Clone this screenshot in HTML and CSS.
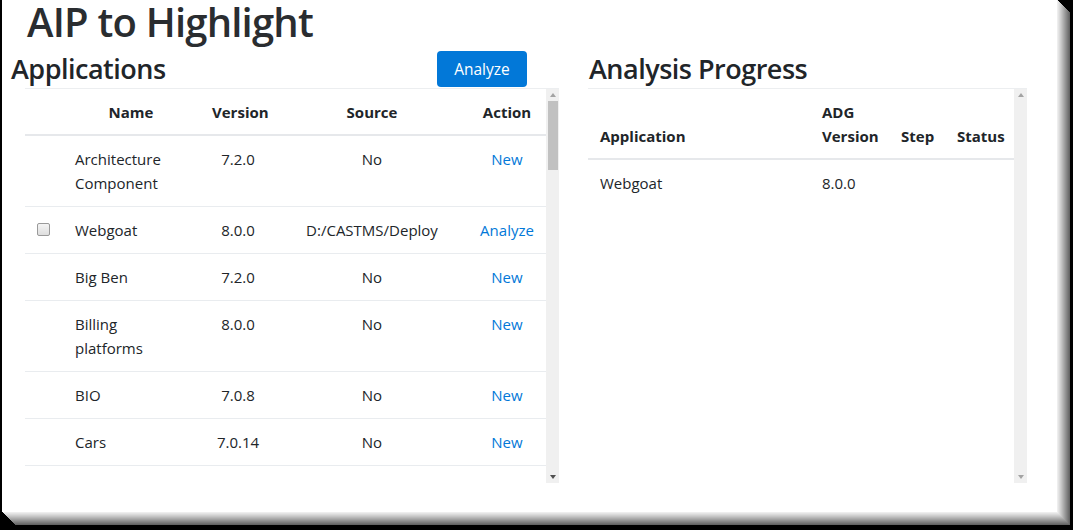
FILE: index.html
```html
<!DOCTYPE html>
<html lang="en">
<head>
<meta charset="utf-8">
<title>AIP to Highlight</title>
<link rel="stylesheet" href="styles.css">
</head>
<body>
<div class="page">
  <h1 class="title">AIP to Highlight</h1>
  <div class="columns">
    <section class="apps">
      <div class="apps-head">
        <h2 class="heading">Applications</h2>
        <button class="btn" type="button">Analyze</button>
      </div>
      <div class="grid-box apps-box">
        <div class="scroll-area">
          <table class="tbl apps-tbl">
            <colgroup>
              <col class="c-check"><col class="c-name"><col class="c-ver"><col class="c-src"><col class="c-act">
            </colgroup>
            <thead>
              <tr><th></th><th>Name</th><th>Version</th><th>Source</th><th>Action</th></tr>
            </thead>
            <tbody>
              <tr><td></td><td class="name">Architecture<br>Component</td><td>7.2.0</td><td>No</td><td><a class="link">New</a></td></tr>
              <tr><td><span class="check"></span></td><td class="name">Webgoat</td><td>8.0.0</td><td>D:/CASTMS/Deploy</td><td><a class="link">Analyze</a></td></tr>
              <tr><td></td><td class="name">Big Ben</td><td>7.2.0</td><td>No</td><td><a class="link">New</a></td></tr>
              <tr><td></td><td class="name">Billing<br>platforms</td><td>8.0.0</td><td>No</td><td><a class="link">New</a></td></tr>
              <tr><td></td><td class="name">BIO</td><td>7.0.8</td><td>No</td><td><a class="link">New</a></td></tr>
              <tr><td></td><td class="name">Cars</td><td>7.0.14</td><td>No</td><td><a class="link">New</a></td></tr>
              <tr><td></td><td class="name">Code Review</td><td>7.0.12</td><td>No</td><td><a class="link">New</a></td></tr>
              <tr><td></td><td class="name">Datamart</td><td>8.0.0</td><td>No</td><td><a class="link">New</a></td></tr>
            </tbody>
          </table>
        </div>
        <div class="sbar">
          <span class="arr-box"><span class="arr up"></span></span>
          <span class="thumb"></span>
          <span class="track-fill"></span>
          <span class="arr-box"><span class="arr down dark"></span></span>
        </div>
      </div>
    </section>
    <section class="progress">
      <div class="prog-head">
        <h2 class="heading">Analysis Progress</h2>
      </div>
      <div class="grid-box prog-box">
        <div class="scroll-area">
          <table class="tbl prog-tbl">
            <colgroup>
              <col class="p-app"><col class="p-ver"><col class="p-step"><col class="p-status">
            </colgroup>
            <thead>
              <tr><th>Application</th><th>ADG<br>Version</th><th>Step</th><th>Status</th></tr>
            </thead>
            <tbody>
              <tr><td>Webgoat</td><td>8.0.0</td><td></td><td></td></tr>
            </tbody>
          </table>
        </div>
        <div class="sbar">
          <span class="arr-box"><span class="arr up"></span></span>
          <span class="track-fill"></span>
          <span class="arr-box"><span class="arr down"></span></span>
        </div>
      </div>
    </section>
  </div>
</div>
</body>
</html>
```
FILE: styles.css
```css
html, body {
  margin: 0;
  padding: 0;
  background: #000;
  overflow: hidden;
}

body {
  width: 1073px;
  height: 530px;
  font-family: "Open Sans", "Noto Sans", "Liberation Sans", sans-serif;
  font-size: 15px;
  line-height: 1.5;
  color: #212529;
}

.page {
  margin: 2px 0 0 2px;
  width: 1055px;
  height: 513px;
  background: #fff;
  box-sizing: border-box;
  box-shadow:
    1px 1px 0 #eeeeee,
    2px 2px 0 #e4e4e4,
    3px 3px 0 #dadada,
    4px 4px 0 #cfcfcf,
    5px 5px 0 #c4c4c4,
    6px 6px 0 #b8b8b8,
    7px 7px 0 #acacac,
    8px 8px 0 #a0a0a0,
    9px 9px 0 #949494,
    10px 10px 0 #888888,
    11px 11px 0 #7c7c7c,
    12px 12px 0 #707070,
    13px 13px 0 #646464;
}

.title {
  margin: -3px 0 -3px 0;
  padding-left: 25px;
  font-size: 40px;
  line-height: 46px;
  height: 46px;
  font-weight: 600;
  color: #2a2d30;
  letter-spacing: -0.8px;
}

.columns {
  display: flex;
  margin-top: 8px;
  padding-left: 9px;
  gap: 29px;
}

.apps {
  width: 548px;
}

.apps-head {
  width: 516px;
  height: 38px;
  display: flex;
  align-items: center;
  justify-content: space-between;
}

.prog-head {
  height: 38px;
  display: flex;
  align-items: center;
}

.heading {
  margin: 0;
  font-size: 27px;
  line-height: 36px;
  font-weight: 600;
  letter-spacing: -0.5px;
  color: #212529;
}

.prog-head .heading {
  margin-left: 1px;
}

.btn {
  width: 90px;
  height: 36px;
  border: 0;
  border-radius: 4px;
  background: #0278d8;
  color: #fff;
  font-family: inherit;
  font-size: 15.5px;
  padding: 0;
  line-height: 36px;
}

.grid-box {
  display: flex;
  border-top: 1px solid #eceef0;
  box-sizing: border-box;
  height: 395px;
}

.apps-box {
  margin-left: 14px;
  width: 534px;
}

.prog-box {
  width: 439px;
}

.scroll-area {
  flex: 1;
  overflow: hidden;
}

.tbl {
  border-collapse: collapse;
  table-layout: fixed;
  width: 100%;
}

.tbl th,
.tbl td {
  padding: 11px 12px;
  border-top: 1px solid #e9ecef;
  line-height: 24px;
}

.tbl thead th {
  border-top: 0;
  padding-bottom: 10px;
  border-bottom: 2px solid #e6e8eb;
  font-weight: 700;
  vertical-align: bottom;
}

.tbl tbody tr:first-child td {
  border-top: 0;
}

.apps-tbl th,
.apps-tbl td {
  text-align: center;
  vertical-align: top;
}

.apps-tbl td.name {
  text-align: left;
  padding-left: 13px;
}

.c-check { width: 37px; }
.c-name { width: 138px; }
.c-ver { width: 76px; }
.c-src { width: 192px; }
.c-act { width: 78px; }

.prog-tbl th,
.prog-tbl td {
  text-align: left;
}

.prog-tbl tbody td {
  vertical-align: top;
}

.p-app { width: 222px; }
.p-ver { width: 79px; }
.p-step { width: 56px; }
.p-status { width: 69px; }

.link {
  color: #0278d8;
  text-decoration: none;
}

.check {
  display: inline-block;
  width: 11px;
  height: 11px;
  margin-top: 5px;
  border: 1px solid #9a9a9a;
  border-radius: 2px;
  background: linear-gradient(#f4f4f4, #dedede);
  vertical-align: top;
}

.sbar {
  width: 13px;
  background: #f0f0f0;
  display: flex;
  flex-direction: column;
  align-items: center;
}

.arr-box {
  height: 12px;
  width: 13px;
  display: flex;
  align-items: center;
  justify-content: center;
}

.arr {
  width: 0;
  height: 0;
  border-left: 3.5px solid transparent;
  border-right: 3.5px solid transparent;
}

.arr.up {
  border-bottom: 4px solid #a3a3a3;
}

.arr.down {
  border-top: 4px solid #a3a3a3;
}

.arr.down.dark {
  border-top-color: #505050;
}

.thumb {
  width: 10px;
  height: 69px;
  background: #c1c1c1;
}

.track-fill {
  flex: 1;
}
```
